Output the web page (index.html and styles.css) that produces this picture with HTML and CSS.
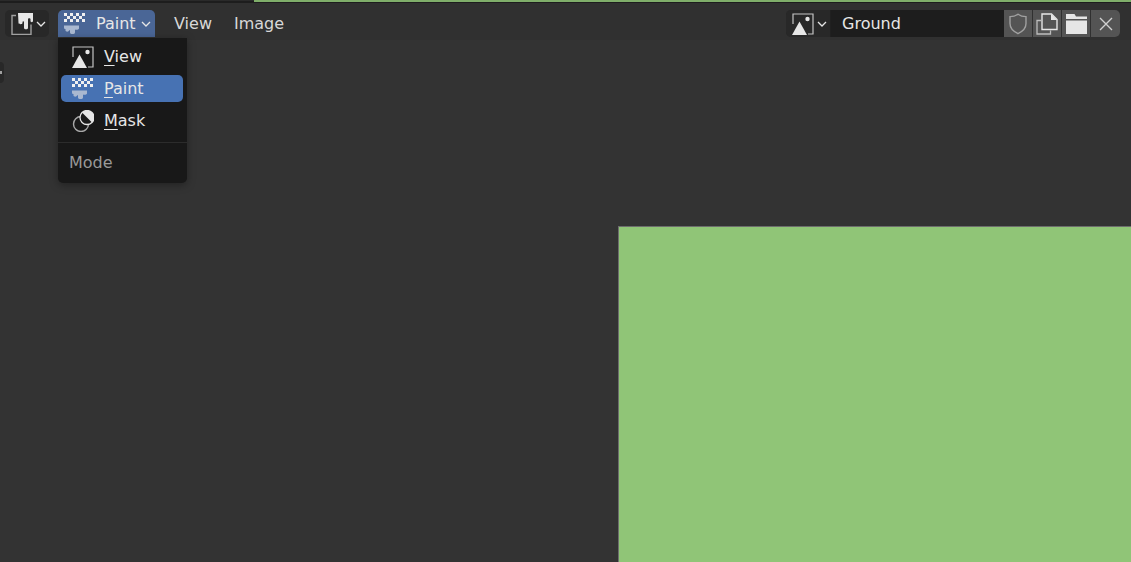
FILE: index.html
```html
<!DOCTYPE html>
<html lang="en">
<head>
    <meta charset="UTF-8" />
    <title>Image Editor</title>
    <link rel="stylesheet" href="styles.css">
</head>
<body>
    <svg class="icon-defs" width="0" height="0">
        <defs>
            <g id="icon-checker">
                <path fill="#f0f0f0" d="M0 0h3v3h-3zM6 0h3v3h-3zM12 0h3v3h-3zM18 0h3v3h-3zM3 3h3v3h-3zM9 3h3v3h-3zM15 3h3v3h-3zM0 6h3v3h-3zM6 6h3v3h-3zM12 6h3v3h-3zM18 6h3v3h-3z" />
                <path fill="#a9b8d0" d="M0 12.500h15v3c0 1.500-4 1.500-4 1v3c0 2-5 2-5 0v-2c0-.5-1-.5-1 0 0 1.500-3.500 1.500-3.500 0v-1.500c-1 0-1.500-.5-1.500-1.500z" />
            </g>
            <g id="icon-image">
                <path d="M1 11v-10h20v20h-5" fill="none" stroke="#c4c4c4" stroke-width="1.200" />
                <path d="M0 22l7.500-13.500 7.500 13.500z" fill="#e6e6e6" />
                <circle cx="15.500" cy="6" r="2.200" fill="#e6e6e6" />
            </g>
        </defs>
    </svg>

    <div class="top-line">
        <span class="top-line-dark"></span>
        <span class="top-line-green"></span>
    </div>

    <header class="header">
        <div class="editor-type">
            <svg width="22" height="22" viewBox="0 0 22 22">
                <path d="M5 2.500h-4v19h19v-10" fill="none" stroke="#a0a0a0" stroke-width="1.400" />
                <path d="M7 0h15v8c0 1.500-2.500 1.500-2.500 0v-2c0-1-2.500-1-2.500 0v9c0 1.800-4 1.800-4 0v-6c0-1-1.500-1-1.500 0v1c0 1.600-4 1.600-4 0z" fill="#e6e6e6" />
            </svg>
            <svg class="chevron" width="10" height="6" viewBox="0 0 10 6"><path d="M1 1l4 4 4-4" /></svg>
        </div>

        <div class="mode-select">
            <svg width="22" height="22" viewBox="0 0 22 22"><use href="#icon-checker" /></svg>
            <span class="mode-label">Paint</span>
            <svg class="chevron" width="10" height="6" viewBox="0 0 10 6"><path d="M1 1l4 4 4-4" /></svg>
        </div>

        <nav class="header-menu">
            <span>View</span>
            <span>Image</span>
        </nav>

        <div class="image-field">
            <div class="image-browse">
                <svg width="22" height="22" viewBox="0 0 22 22"><use href="#icon-image" /></svg>
                <svg class="chevron" width="10" height="6" viewBox="0 0 10 6"><path d="M1 1l4 4 4-4" /></svg>
            </div>
            <div class="image-name">Ground</div>
            <button class="field-btn" type="button">
                <svg width="20" height="22" viewBox="0 0 20 22"><path d="M10 1.200c2.500 1.800 5.500 2.400 8 2.400v7c0 4.600-3.500 8-8 10-4.500-2-8-5.400-8-10v-7c2.500 0 5.500-.6 8-2.400z" fill="none" stroke="#a0a0a0" stroke-width="1.400" /></svg>
            </button>
            <button class="field-btn" type="button">
                <svg width="22" height="22" viewBox="0 0 22 22">
                    <path d="M5 7.500h-4v13.500h13.500v-3.500" fill="none" stroke="#bdbdbd" stroke-width="1.300" />
                    <path d="M6 16.500v-15.500h9.500l5.500 5.500v10z" fill="none" stroke="#e6e6e6" stroke-width="1.400" />
                    <path d="M15 1v6h6z" fill="#e6e6e6" />
                </svg>
            </button>
            <button class="field-btn" type="button">
                <svg width="23" height="22" viewBox="0 0 23 22"><path d="M1 1h8.500l1.500 2.500h11v2.500h-21zM1 7.500h21v13.500h-21z" fill="#e6e6e6" /></svg>
            </button>
            <button class="field-btn field-btn-last" type="button">
                <svg width="14" height="14" viewBox="0 0 14 14"><path d="M1 1l12 12M13 1l-12 12" stroke="#d0d0d0" stroke-width="1.400" fill="none" /></svg>
            </button>
        </div>
    </header>

    <main class="canvas">
        <span class="region-tab"></span>
        <div class="image-preview"></div>
    </main>

    <div class="mode-menu">
        <div class="menu-item">
            <svg width="22" height="22" viewBox="0 0 22 22"><use href="#icon-image" /></svg>
            <span><u>V</u>iew</span>
        </div>
        <div class="menu-item menu-item-active">
            <svg width="22" height="22" viewBox="0 0 22 22"><use href="#icon-checker" /></svg>
            <span><u>P</u>aint</span>
        </div>
        <div class="menu-item">
            <svg width="22" height="22" viewBox="0 0 22 22">
                <circle cx="9" cy="14" r="7.500" fill="none" stroke="#a8a8a8" stroke-width="1.400" />
                <circle cx="15" cy="7.500" r="7" fill="#1a1a1a" stroke="#e6e6e6" stroke-width="1.300" />
                <path d="M10 2.500a7 7 0 0 1 10 10z" fill="#e6e6e6" />
            </svg>
            <span><u>M</u>ask</span>
        </div>
        <div class="menu-divider"></div>
        <div class="menu-title">Mode</div>
    </div>
</body>
</html>
```

FILE: styles.css
```css
html, body {
    height: 100%;
}
body {
    margin: 0;
    background-color: #303030;
    color: #e6e6e6;
    font-family: "DejaVu Sans", sans-serif;
    font-size: 16px;
    overflow: hidden;
    display: flex;
    flex-direction: column;
}
svg {
    display: block;
    flex: none;
}
.icon-defs {
    position: absolute;
}
.top-line {
    display: flex;
    height: 3px;
    flex: none;
    background: #1d1d1d;
}
.top-line-dark {
    width: 254px;
    height: 1px;
    background: #2a2a2a;
}
.top-line-green {
    flex: 1;
    height: 2px;
    background: #7fae6a;
}
.header {
    height: 37px;
    flex: none;
    display: flex;
    align-items: flex-start;
    padding: 7px 11px 0 5px;
    box-sizing: border-box;
    background: #303030;
}
.editor-type {
    display: flex;
    align-items: center;
    gap: 3px;
    width: 44px;
    height: 27px;
    padding-left: 6px;
    box-sizing: border-box;
    background: #282828;
    border-radius: 5px;
}
.chevron {
    fill: none;
    stroke: #e6e6e6;
    stroke-width: 1.300;
}
.mode-select {
    display: flex;
    align-items: center;
    width: 97px;
    height: 27px;
    margin-left: 9px;
    padding-left: 6px;
    box-sizing: border-box;
    background: #4a6696;
    border-radius: 5px 5px 0 0;
}
.mode-label {
    margin-left: 10px;
    margin-right: 5px;
}
.header-menu {
    display: flex;
    gap: 22px;
    height: 27px;
    align-items: center;
    margin-left: 19px;
    color: #d8d8d8;
}
.image-field {
    display: flex;
    height: 27px;
    margin-left: auto;
    border-radius: 5px;
    overflow: hidden;
    background: #282828;
}
.image-browse {
    display: flex;
    align-items: center;
    gap: 3px;
    width: 45px;
    padding-left: 6px;
    box-sizing: border-box;
    background: #282828;
    border-right: 1px solid #202020;
}
.image-name {
    width: 173px;
    padding-left: 11px;
    box-sizing: border-box;
    line-height: 27px;
    background: #1d1d1d;
}
.field-btn {
    width: 29px;
    padding: 0;
    border: none;
    border-right: 1px solid #303030;
    background: #545454;
    display: flex;
    align-items: center;
    justify-content: center;
}
.field-btn-last {
    border-right: none;
}
.canvas {
    flex: 1;
    position: relative;
    background: #333333;
    overflow: hidden;
}
.region-tab {
    position: absolute;
    left: 0;
    top: 22px;
    width: 4px;
    height: 21px;
    background: #282828;
    border-radius: 0 4px 4px 0;
}
.region-tab::after {
    content: "";
    position: absolute;
    left: 0;
    top: 9px;
    width: 2px;
    height: 3px;
    background: #a0a0a0;
}
.image-preview {
    position: absolute;
    left: 618px;
    top: 186px;
    width: 520px;
    height: 340px;
    background: #90c577;
    border: 1px solid #6d6d6d;
    box-sizing: border-box;
}
.mode-menu {
    position: absolute;
    left: 58px;
    top: 38px;
    width: 129px;
    height: 145px;
    padding: 5px 4px 0 3px;
    box-sizing: border-box;
    background: #181818;
    border-radius: 0 0 5px 5px;
    box-shadow: 0 2px 8px rgba(0, 0, 0, 0.35);
}
.menu-item {
    display: flex;
    align-items: center;
    gap: 10px;
    height: 27px;
    padding-left: 11px;
    margin-bottom: 5px;
    border-radius: 5px;
}
.menu-item u {
    text-underline-offset: 3px;
    text-decoration-thickness: 1px;
}
.menu-item-active {
    background: #4772b3;
}
.menu-divider {
    height: 1px;
    margin: 8px -4px 0 -3px;
    background: #2c2c2c;
}
.menu-title {
    margin-top: 10px;
    padding-left: 8px;
    color: #999999;
}
```
